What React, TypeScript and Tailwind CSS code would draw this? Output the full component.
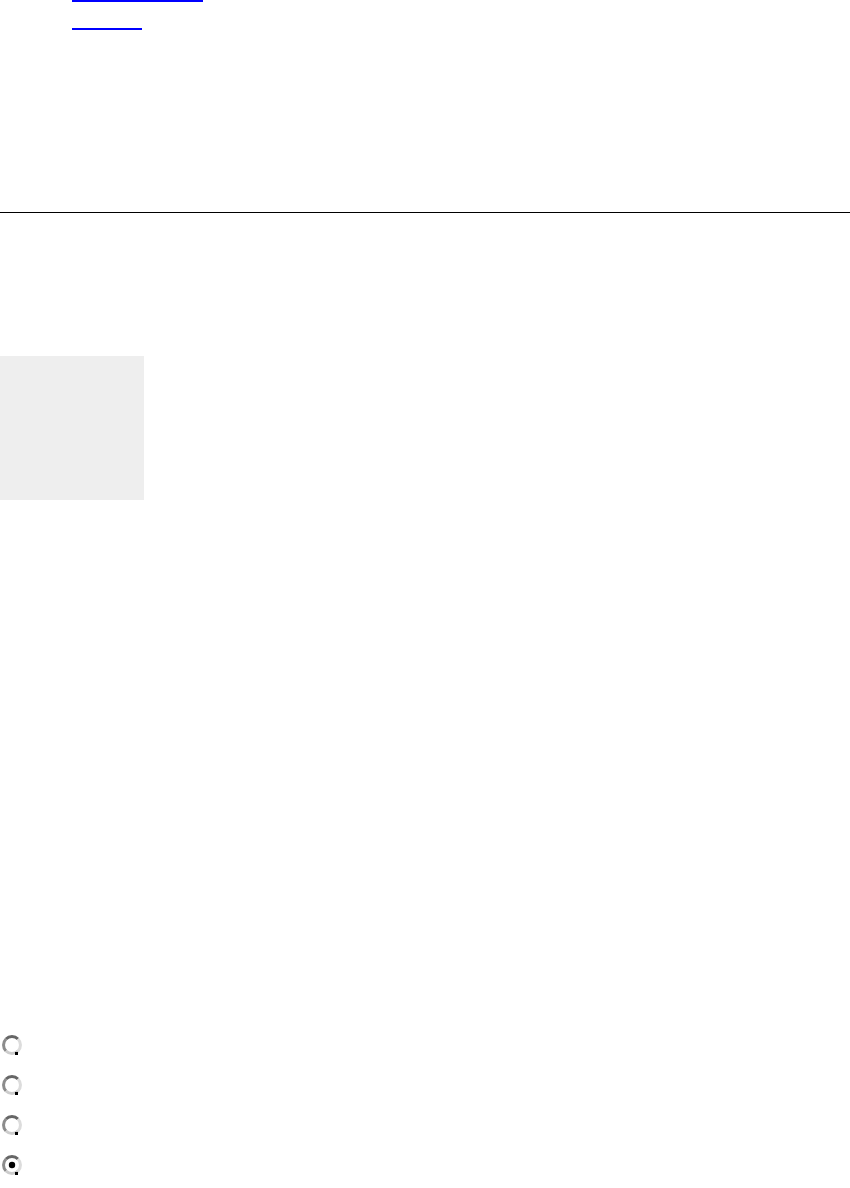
function Radio({ checked }: { checked?: boolean }) {
  return (
    <svg width="22" height="22" viewBox="0 0 22 22" className="block">
      <circle cx="11" cy="11" r="8.5" fill="#ffffff" />
      <path d="M5 17 A8.5 8.5 0 0 1 5 5" stroke="#8c8c8c" strokeWidth="3" fill="none" />
      <path d="M5 5 A8.5 8.5 0 0 1 17 5" stroke="#666666" strokeWidth="3" fill="none" />
      <path d="M17 5 A8.5 8.5 0 0 1 17 17" stroke="#dcdcdc" strokeWidth="3" fill="none" />
      <path d="M17 17 A8.5 8.5 0 0 1 5 17" stroke="#cccccc" strokeWidth="3" fill="none" />
      <rect x="14" y="18" width="3" height="3" fill="#000000" />
      {checked && <circle cx="11" cy="11" r="3.2" fill="#000000" />}
    </svg>
  )
}

export default function App() {
  return (
    <div className="w-[850px] h-[1188px] bg-white overflow-hidden font-['Liberation_Sans',sans-serif]">
      <div className="pl-[72px] flex flex-col items-start">
        <span className="block w-[131px] h-[2px] bg-[#0000ff]" />
        <span className="block w-[70px] h-[2px] bg-[#0000ff] mt-[26px]" />
      </div>

      <hr className="mt-[182px] border-0 border-t border-black" />

      <div className="mt-[143px] w-[144px] h-[144px] bg-[#eeeeee]" />

      <div className="mt-[534px] pl-[1px] flex flex-col gap-[18px]">
        <Radio />
        <Radio />
        <Radio />
        <Radio checked />
      </div>
    </div>
  )
}
